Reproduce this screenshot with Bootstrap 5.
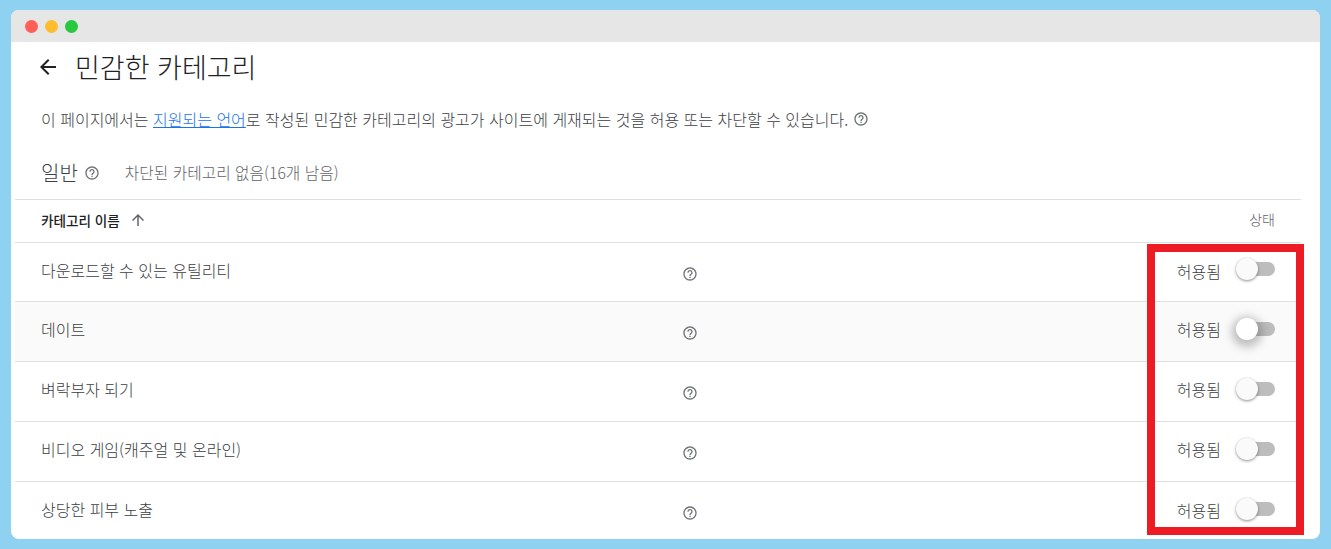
<!DOCTYPE html>
<html lang="ko">
<head>
  <meta charset="UTF-8" />
  <title>민감한 카테고리</title>
  <link href="https://cdn.jsdelivr.net/npm/bootstrap@5.3.0/dist/css/bootstrap.min.css" rel="stylesheet">
  <style>
    html, body { height: 549px; overflow: hidden; }
    body { background: #8fd1f0; padding: 10px 11px; font-family: "Noto Sans CJK KR", "Noto Sans", Roboto, sans-serif; font-weight: 300; color: #3c4043; font-size: 16px; }
    .win { position: relative; width: 1309px; height: 529px; background: #fff; border-radius: 8px; overflow: hidden; }
    .win-bar { height: 32px; background: #e6e6e6; padding-left: 14px; gap: 7px; }
    .win-dot { width: 13px; height: 13px; border-radius: 50%; }
    .page-head { height: 50px; padding-left: 25px; gap: 15px; }
    .page-title { font-size: 27px; font-weight: 300; color: #202124; margin: 0; line-height: 50px; }
    .page-desc { height: 55px; padding: 12px 0 0 30px; line-height: 30px; margin: 0; }
    .page-desc a { color: #1a73e8; }
    .q-ico { width: 16px; height: 16px; flex: none; }
    .desc-q { vertical-align: -1px; }
    .sec-head { height: 53px; border-bottom: 1px solid #dfdfdf; margin-left: 4px; width: 1286px; padding-left: 26px; }
    .sec-title { font-size: 20px; color: #3c4043; margin: 0 6px 0 0; font-weight: 300; }
    .sec-note { margin-left: 25px; font-size: 15.750px; color: #5f6368; }
    .cat-list { width: 1286px; margin-left: 4px; }
    .cat-top { height: 43px; padding: 0 26px 2px; border-bottom: 1px solid #dfdfdf; font-size: 13.600px; }
    .cat-name-h { font-weight: 500; color: #202124; }
    .cat-top svg { margin-left: 9px; }
    .cat-state-h { color: #5f6368; margin-left: auto; font-size: 14px; padding-bottom: 2px; }
    .cat-row { height: 60px; padding-left: 26px; border-bottom: 1px solid #dfdfdf; }
    .cat-top + .cat-row { height: 59px; }
    .cat-row:last-child { border-bottom: 0; }
    .cat-row.hov { background: #fafafa; }
    .cat-name { width: 641px; flex: none; padding-bottom: 6px; }
    .cat-q { margin-top: 2px; }
    .cat-state { margin-left: auto; padding-right: 26px; gap: 19px; }
    .cat-state span { padding-bottom: 5px; }
    .cat-top + .cat-row .cat-name { padding-bottom: 4px; }
    .cat-top + .cat-row .cat-q { margin-top: 4px; }
    .cat-top + .cat-row .cat-state span { padding-bottom: 3px; }
    .tog { position: relative; width: 35px; height: 14px; border-radius: 7px; background: #bdbdbd; margin-top: -6px; }
    .tog-knob { position: absolute; left: -4px; top: -4px; width: 22px; height: 22px; border-radius: 50%; background: #fafafa; box-shadow: 0 1px 3px rgba(0,0,0,.45); }
    .hov .tog-knob { box-shadow: 0 3px 10px 4px rgba(0,0,0,.25); background: #fff; }
    .red-box { position: absolute; left: 1136px; top: 234px; width: 157px; height: 291px; border: 8px solid #ed1c24; }
  </style>
</head>
<body>
  <svg width="0" height="0" class="position-absolute">
    <symbol id="q" viewBox="0 0 24 24"><path fill="#6f7377" d="M11 18h2v-2h-2v2zm1-16C6.48 2 2 6.48 2 12s4.48 10 10 10 10-4.48 10-10S17.52 2 12 2zm0 18c-4.41 0-8-3.59-8-8s3.59-8 8-8 8 3.59 8 8-3.59 8-8 8zm0-14c-2.21 0-4 1.79-4 4h2c0-1.100.9-2 2-2s2 .9 2 2c0 2-3 1.750-3 5h2c0-2.250 3-2.500 3-5 0-2.210-1.790-4-4-4z"/></symbol>
  </svg>
  <div class="win">
    <div class="win-bar d-flex align-items-center">
      <span class="win-dot" style="background:#ff5f57"></span>
      <span class="win-dot" style="background:#febc2e"></span>
      <span class="win-dot" style="background:#28c840"></span>
    </div>
    <div class="page-head d-flex align-items-center">
      <svg width="24" height="24" viewBox="0 0 24 24"><path fill="#202124" d="M20 11H7.830l5.590-5.590L12 4l-8 8 8 8 1.410-1.410L7.830 13H20v-2z"/></svg>
      <h1 class="page-title">민감한 카테고리</h1>
    </div>
    <p class="page-desc">이 페이지에서는 <a href="#">지원되는 언어</a>로 작성된 민감한 카테고리의 광고가 사이트에 게재되는 것을 허용 또는 차단할 수 있습니다. <svg class="q-ico desc-q"><use href="#q"/></svg></p>
    <div class="sec-head d-flex align-items-center">
      <h2 class="sec-title">일반</h2>
      <svg class="q-ico"><use href="#q"/></svg>
      <span class="sec-note">차단된 카테고리 없음(16개 남음)</span>
    </div>
    <div class="cat-list">
      <div class="cat-top d-flex align-items-center">
        <span class="cat-name-h">카테고리 이름</span>
        <svg width="18" height="18" viewBox="0 0 24 24"><path fill="#5f6368" d="M4 12l1.410 1.410L11 7.830V20h2V7.830l5.580 5.590L20 12l-8-8-8 8z"/></svg>
        <span class="cat-state-h">상태</span>
      </div>
      <div class="cat-row d-flex align-items-center">
        <span class="cat-name">다운로드할 수 있는 유틸리티</span>
        <svg class="q-ico cat-q"><use href="#q"/></svg>
        <div class="cat-state d-flex align-items-center"><span>허용됨</span><div class="tog"><div class="tog-knob"></div></div></div>
      </div>
      <div class="cat-row hov d-flex align-items-center">
        <span class="cat-name">데이트</span>
        <svg class="q-ico cat-q"><use href="#q"/></svg>
        <div class="cat-state d-flex align-items-center"><span>허용됨</span><div class="tog"><div class="tog-knob"></div></div></div>
      </div>
      <div class="cat-row d-flex align-items-center">
        <span class="cat-name">벼락부자 되기</span>
        <svg class="q-ico cat-q"><use href="#q"/></svg>
        <div class="cat-state d-flex align-items-center"><span>허용됨</span><div class="tog"><div class="tog-knob"></div></div></div>
      </div>
      <div class="cat-row d-flex align-items-center">
        <span class="cat-name">비디오 게임(캐주얼 및 온라인)</span>
        <svg class="q-ico cat-q"><use href="#q"/></svg>
        <div class="cat-state d-flex align-items-center"><span>허용됨</span><div class="tog"><div class="tog-knob"></div></div></div>
      </div>
      <div class="cat-row d-flex align-items-center">
        <span class="cat-name">상당한 피부 노출</span>
        <svg class="q-ico cat-q"><use href="#q"/></svg>
        <div class="cat-state d-flex align-items-center"><span>허용됨</span><div class="tog"><div class="tog-knob"></div></div></div>
      </div>
    </div>
    <div class="red-box"></div>
  </div>
  <script src="https://cdn.jsdelivr.net/npm/bootstrap@5.3.0/dist/js/bootstrap.bundle.min.js"></script>
</body>
</html>
